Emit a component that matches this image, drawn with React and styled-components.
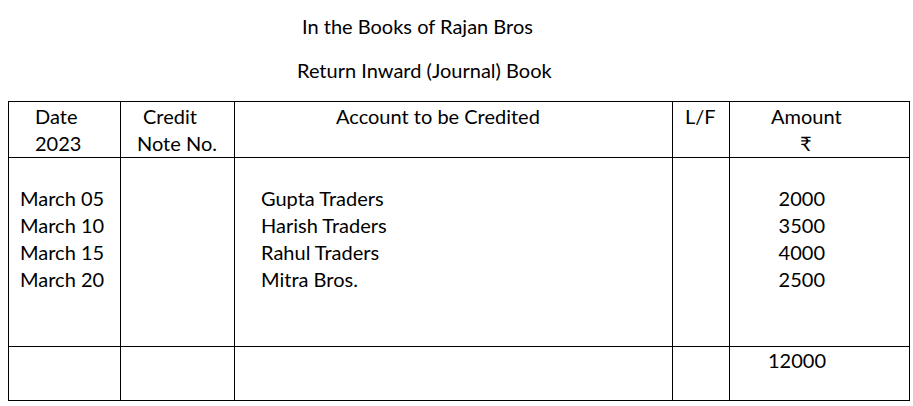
import React from "react";
import styled, { createGlobalStyle } from "styled-components";

const Global = createGlobalStyle`
  html, body { margin: 0; padding: 0; background: #fff; }
  body { font-family: "Lato", "Open Sans", sans-serif; color: #000; }
`;

const Page = styled.div`
  width: 913px;
  height: 406px;
  box-sizing: border-box;
  padding: 13px 0 0 8px;
  font-size: 20px;
  line-height: 27px;
`;

const Title = styled.div`
  padding-left: ${(p) => p.$indent}px;
  margin-bottom: ${(p) => p.$gap || 0}px;
  white-space: nowrap;
`;

const Table = styled.table`
  margin-top: 17px;
  border-collapse: collapse;
  table-layout: fixed;
  width: 902px;
`;

const Cell = styled.td`
  border: 1px solid #000;
  vertical-align: top;
  padding: ${(p) => p.$pt || 0}px 0 0 0;
  height: ${(p) => p.$h}px;
  box-sizing: border-box;
  white-space: nowrap;
`;

const Line = styled.div`
  padding-left: ${(p) => p.$x || 0}px;
  text-align: ${(p) => p.$align || "left"};
  padding-right: ${(p) => p.$r || 0}px;
`;

const cols = [112, 114, 438, 57, 180];

const rows = [
  ["March 05", "Gupta Traders", "2000"],
  ["March 10", "Harish Traders", "3500"],
  ["March 15", "Rahul Traders", "4000"],
  ["March 20", "Mitra Bros.", "2500"],
];

export default function App() {
  return (
    <Page>
      <Global />
      <Title $indent={294} $gap={17}>In the Books of Rajan Bros</Title>
      <Title $indent={289}>Return Inward (Journal) Book</Title>
      <Table>
        <colgroup>
          {cols.map((w, i) => (
            <col key={i} style={{ width: w }} />
          ))}
        </colgroup>
        <tbody>
          <tr>
            <Cell $h={56} $pt={1}>
              <Line $x={26}>Date</Line>
              <Line $x={26}>2023</Line>
            </Cell>
            <Cell $h={56} $pt={1}>
              <Line $x={22}>Credit</Line>
              <Line $x={16}>Note No.</Line>
            </Cell>
            <Cell $h={56} $pt={1}>
              <Line $x={101}>Account to be Credited</Line>
            </Cell>
            <Cell $h={56} $pt={1}>
              <Line $x={12}>L/F</Line>
            </Cell>
            <Cell $h={56} $pt={1}>
              <Line $x={41}>Amount</Line>
              <Line $x={70}>₹</Line>
            </Cell>
          </tr>
          <tr>
            <Cell $h={189} $pt={27}>
              {rows.map((r) => (
                <Line key={r[0]} $x={11}>{r[0]}</Line>
              ))}
            </Cell>
            <Cell $h={189} />
            <Cell $h={189} $pt={27}>
              {rows.map((r) => (
                <Line key={r[1]} $x={26}>{r[1]}</Line>
              ))}
            </Cell>
            <Cell $h={189} />
            <Cell $h={189} $pt={27}>
              {rows.map((r) => (
                <Line key={r[2]} $align="right" $r={84}>{r[2]}</Line>
              ))}
            </Cell>
          </tr>
          <tr>
            <Cell $h={54} $pt={0} />
            <Cell $h={54} $pt={0} />
            <Cell $h={54} $pt={0} />
            <Cell $h={54} $pt={0} />
            <Cell $h={54} $pt={0}>
              <Line $align="right" $r={83}>12000</Line>
            </Cell>
          </tr>
        </tbody>
      </Table>
    </Page>
  );
}
